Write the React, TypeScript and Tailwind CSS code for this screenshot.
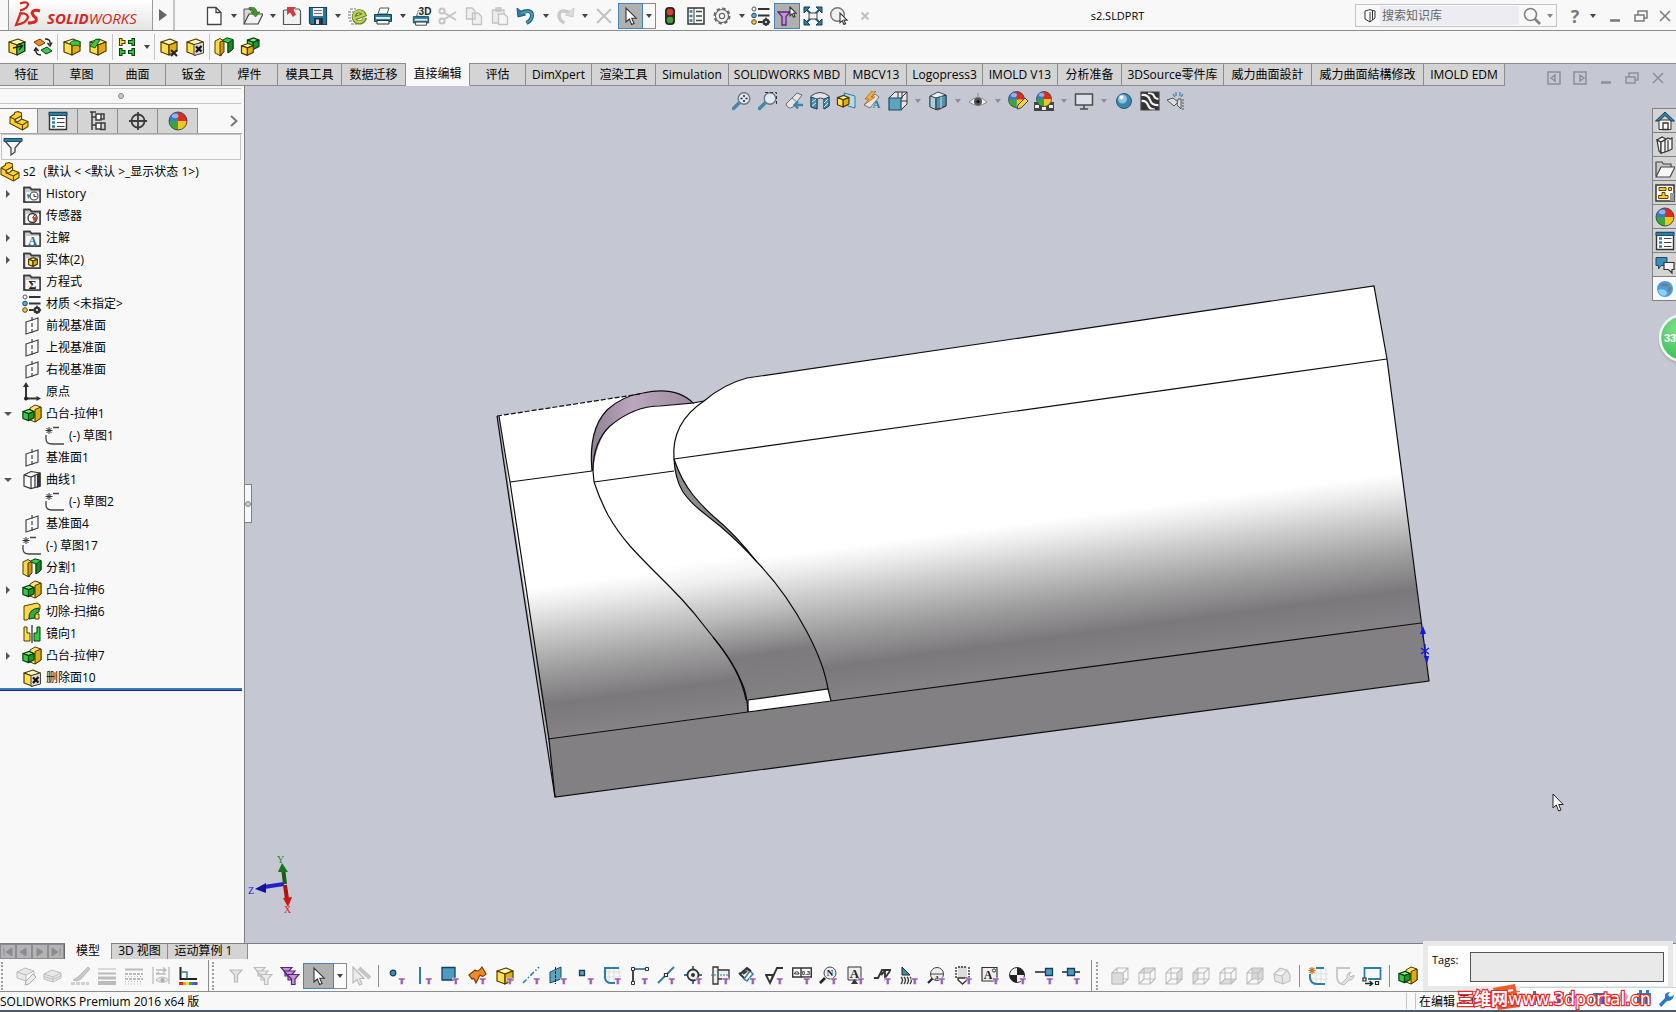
import React from "react";

/* ---------- shared icon parts ---------- */

function Cube({ x = 0, y = 0, s = 1, green = false }: { x?: number; y?: number; s?: number; green?: boolean }) {
  const c = green ? ["#8df08a", "#2fcf3f", "#149a26", "#0a3d10"] : ["#fff6b0", "#ffe04a", "#e2ab10", "#4f3b00"];
  return (
    <g transform={`translate(${x} ${y}) scale(${s})`} stroke={c[3]} strokeWidth={1.2 / s} strokeLinejoin="round">
      <path d="M2 5 11 2 18 5 10 8Z" fill={c[0]} />
      <path d="M2 5 10 8V18L2 15Z" fill={c[1]} />
      <path d="M10 8 18 5V14L10 18Z" fill={c[2]} />
    </g>
  );
}

function Ball({ cx = 10, cy = 10, r = 8 }: { cx?: number; cy?: number; r?: number }) {
  return (
    <g transform={`translate(${cx} ${cy}) scale(${r / 8})`}>
      <circle r="8" fill="#3a78d8" />
      <path d="M0 0V-8A8 8 0 0 1 8 0Z" fill="#dd2b20" />
      <path d="M0 0H8A8 8 0 0 1 0 8Z" fill="#f3c51f" />
      <path d="M0 0V8A8 8 0 0 1-8 0Z" fill="#35a838" />
      <ellipse cx="-2.5" cy="-4.5" rx="3" ry="2" fill="#fff" opacity=".45" />
      <circle r="8" fill="none" stroke="#444" strokeWidth=".8" />
    </g>
  );
}

const Folder = () => (
  <g stroke="#3c3c3c" strokeWidth="1.4" fill="#eee">
    <path d="M2 3.5H8L9.500 5.500H18V18H2Z" fill="#c9c9c9" />
    <path d="M4 8H18V18H4Z" fill="#f6f6f6" stroke="none" />
    <path d="M2 3.500H8L9.500 5.500H18V18H2Z" fill="none" />
  </g>
);

const Pointer = ({ x = 0, y = 0, s = 1 }: { x?: number; y?: number; s?: number }) => (
  <path transform={`translate(${x} ${y}) scale(${s})`} d="M0 0V14L3.300 11 5.600 16.500 8 15.400 5.700 10.200H10.200Z" fill="#fff" stroke="#333" strokeWidth={1.1 / s} />
);

const Wire = () => <path d="M2 7H13V18H2ZM7 2H18V13H7ZM2 7 7 2M13 7 18 2M13 18 18 13M2 18 7 13" fill="none" stroke="#bdbdbd" strokeWidth="1.1" />;

const Glyph = ({ x, y, size, fill, children }: { x: number; y: number; size: number; fill: string; children: string }) => (
  <text x={x} y={y} fontSize={size} fill={fill} fontWeight="700" fontFamily="Liberation Serif, serif" textAnchor="middle">
    {children}
  </text>
);

const Mini = ({ children, color = "none" }: { children: React.ReactNode; color?: string }) => (
  <g fill={color} stroke="#3c3c3c" strokeWidth="1.5">
    {children}
  </g>
);

const magnifier = (
  <>
    <path d="M7 12 1.500 17.500" stroke="#4a86aa" strokeWidth="3.500" strokeLinecap="round" />
    <circle cx="12" cy="7.500" r="5.800" fill="#dfe9f0" stroke="#6e7780" strokeWidth="1.400" />
  </>
);

const printer = (
  <>
    <path d="M5 8 7 2H16L14 8Z" fill="#fff" stroke="#555" />
    <path d="M1.500 8.500H18.500V15.500H1.500Z" fill="#2f7fa3" stroke="#1a3f55" />
    <path d="M3 12H17" stroke="#d6ecf6" strokeWidth="2" />
    <path d="M4 14.500H16V18H4Z" fill="#fff" stroke="#333" />
  </>
);

const bodies = (
  <>
    <path d="M8 4 13 1 19 3V14L13 18 8 16Z" fill="#ffe27a" stroke="#4f3b00" />
    <path d="M13 5.500 19 3V14L13 18Z" fill="#e2ab10" stroke="#4f3b00" />
    <Cube x={-0.500} y={4} s={0.700} green />
  </>
);

const split = (
  <>
    <path d="M1 4 6 1.500 9 3.500V15L7 19 1 16Z" fill="#ffd84a" stroke="#4f3b00" />
    <path d="M6 5 10 3.500V15L6 18.500Z" fill="#c99810" stroke="#4f3b00" />
    <path d="M8 3.500 13 .8 19 2.500V12L14 16V6Z" fill="#2fcf3f" stroke="#0a3d10" />
    <path d="M14 6 19 2.500V12L14 16Z" fill="#128b22" stroke="#0a3d10" />
  </>
);

const boxX = (
  <>
    <Cube />
    <path d="M9 7.500 18.500 5V16L9 18.500Z" fill="#d8d8d8" stroke="#444" />
    <path d="M11 9.500 16.500 14.500M16.500 9 11 15" stroke="#111" strokeWidth="2.200" />
  </>
);

const planeIcon = (
  <>
    <path d="M4 6 16 2V14L4 18Z" fill="none" stroke="#444" strokeWidth="1.200" />
    <path d="M10 1V19" stroke="#444" strokeWidth="1.200" strokeDasharray="4 2" />
  </>
);

const sketchIcon = (
  <>
    <path d="M1 9V13Q1 18 7 18H19M8 1.500H14" fill="none" stroke="#444" strokeWidth="1.300" />
    <path d="M4 1V8M.5 4.500H7.500M1.500 2 6.500 7M6.500 2 1.500 7" stroke="#333" />
  </>
);

const materialIcon = (
  <>
    <circle cx="3" cy="3" r="2" fill="#fff" stroke="#555" />
    <circle cx="3" cy="9.500" r="2.300" fill="#4fb3df" stroke="#245" />
    <circle cx="3" cy="16" r="2.300" fill="#ffc928" stroke="#543" />
    <path d="M7 3H18.500M7 9.500H18.500M7 16H11" stroke="#333" strokeWidth="1.800" />
    <circle cx="15" cy="16" r="2.400" fill="none" stroke="#333" strokeWidth="2.400" />
    <path d="M15 11.500V20M10.800 16H19.200" stroke="#333" strokeWidth="1.400" />
    <circle cx="15" cy="16" r="1.100" fill="#eee" />
  </>
);

const listIcon = (
  <>
    <path d="M1.500 1.500H18.500V18.500H1.500Z" fill="#fff" stroke="#333" strokeWidth="1.400" />
    <path d="M1 1.500H19V4.500H1Z" fill="#2f7fa3" stroke="#1d4c66" />
    <path d="M4 7.500H7M4 11.500H7M4 15.500H7" stroke="#2f7fa3" strokeWidth="2.400" />
    <path d="M9 7.500H16.500M9 11.500H16.500M9 15.500H16.500" stroke="#444" strokeWidth="1.200" />
  </>
);

const partIcon = (
  <g stroke="#5c4500" strokeWidth="1.100" strokeLinejoin="round">
    <path d="M1 6 5.500 3V1.500L9 .5 12.500 2V8L19 10.500V15.500L13.500 19 1 12.500Z" fill="#ffd02e" />
    <path d="M1 6 6 8.500 12.500 5M6 8.500V11L13.500 14 19 10.500M13.500 14V19" fill="none" />
    <path d="M6 8.500 12.500 5V8L8 11.500Z" fill="#fff0a0" />
  </g>
);

const funnel3 = (stroke: string, fill: string) => (
  <g fill={fill} stroke={stroke} strokeWidth="1.200">
    <path d="M1 1.500H12L8 6V10H5V6Z" />
    <path d="M4 5H15L11 9.500V14H8V9.500Z" />
    <path d="M7 8.500H19L15 13V18.500H11.500V13Z" />
  </g>
);

const originIcon = (
  <>
    <path d="M4 17V3M4 16.500H16" stroke="#333" strokeWidth="2" />
    <path d="M4 0 7 5H1ZM19 16.500 14.500 14V19Z" fill="#333" />
    <circle cx="4" cy="16.500" r="2" fill="#222" />
  </>
);

const chats = (
  <>
    <path d="M1 2.500H12V10.500H6L3.500 14V10.500H1Z" fill="#3c8db8" stroke="#1d4c66" />
    <path d="M9 7.500H19V14.500H17V18L13.500 14.500H9Z" fill="#f4f4f4" stroke="#333" strokeWidth="1.200" />
  </>
);

/* ---------- 20x20 icon set ---------- */

const icons: Record<string, React.ReactNode> = {
  newDoc: <path d="M3.500 1.500H12L17 6.500V18.500H3.500ZM12 1.500V6.500H17" fill="#fff" stroke="#444" strokeWidth="1.300" />,
  open: (
    <>
      <path d="M1 17V3H7L8 5H13V9" fill="#d8d8d8" stroke="#555" />
      <path d="M1 18 6 8H20L15 18Z" fill="#f2f2f2" stroke="#444" strokeWidth="1.200" />
      <path d="M6 1.500Q13 0 14 6H17L12.500 11 8 6H11Q10 3 6 3.500Z" fill="#3f9a28" stroke="#246015" strokeWidth=".6" />
    </>
  ),
  flag: (
    <>
      <path d="M2 4H8M13 3H17L18.500 5V18.500H1.500V4" fill="#f1f1f1" stroke="#555" strokeWidth="1.200" />
      <path d="M5 1H14L11.500 4 14 8.500 11 11 8 6.500 5 9Z" fill="#d13a3f" />
    </>
  ),
  save: (
    <>
      <path d="M1.500 1.500H18.500V18.500H3L1.500 17Z" fill="#2a7a9f" stroke="#173f55" strokeWidth="1.200" />
      <path d="M5 2H15V10H5Z" fill="#eee" />
      <path d="M6 4.500H14M6 7.500H14" stroke="#777" />
      <path d="M6 12H15V18.500H6Z" fill="#234" />
      <path d="M8 13.500H11V18H8Z" fill="#ddd" />
    </>
  ),
  publish: (
    <>
      <path d="M3 3H9M1 6H7M1 9H6M1 12H6M2 15H8M4 18H10" stroke="#777" strokeDasharray="3 1" />
      <path d="M17.500 12.500A5.500 5.500 0 1 1 17.500 9.500L8 11.500" transform="rotate(-8 12 10)" fill="none" stroke="#66801c" strokeWidth="4.200" />
      <path d="M17.200 12.500A5.500 5.500 0 1 1 17.400 9.500L8 11.500" transform="rotate(-8 12 10)" fill="none" stroke="#b9d45a" strokeWidth="2.200" />
    </>
  ),
  print: printer,
  print3d: (
    <>
      <g transform="translate(0 3) scale(.9)">{printer}</g>
      <text x="13" y="9" fontSize="10" fontWeight="700" fontFamily="Liberation Sans, sans-serif" textAnchor="middle" fill="#222" stroke="#f8f8f8" strokeWidth="2" paintOrder="stroke">3D</text>
    </>
  ),
  cut: (
    <g fill="none" stroke="#c4c4c4" strokeWidth="2">
      <circle cx="4" cy="5" r="2.600" />
      <circle cx="4" cy="15" r="2.600" />
      <path d="M6 6.500 18 14M6 13.500 18 6" />
    </g>
  ),
  copy: <path d="M2.500 2H8L11 5V13H2.500ZM8.500 7H14L17.500 10.500V18.500H8.500Z" fill="#f0f0f0" stroke="#c2c2c2" strokeWidth="1.300" />,
  paste: (
    <>
      <path d="M2.500 4H14V17H2.500ZM6 2H11V5H6Z" fill="#ececec" stroke="#c2c2c2" strokeWidth="1.300" />
      <path d="M8.500 8H14L17.500 11V18.500H8.500Z" fill="#f6f6f6" stroke="#c2c2c2" strokeWidth="1.300" />
    </>
  ),
  undo: (
    <>
      <path d="M4 7Q16 2 16 9.500 16 14 10.500 17" fill="none" stroke="#1d5876" strokeWidth="4" />
      <path d="M1 2 2 11 9.500 9Z" fill="#2f7fa3" stroke="#1d5876" />
      <path d="M5 7Q16 2.500 16 9.500 16 14 11 16.500" fill="none" stroke="#4a9cc0" strokeWidth="2" />
    </>
  ),
  redo: (
    <>
      <path d="M16 7Q4 2 4 9.500 4 14 9.500 17" fill="none" stroke="#cacaca" strokeWidth="3.500" />
      <path d="M19 2 18 11 10.500 9Z" fill="#dcdcdc" stroke="#cacaca" />
    </>
  ),
  delete: <path d="M3 3 17 17M17 3 3 17" stroke="#c2c2c2" strokeWidth="2" />,
  pointer: <Pointer x={5} y={2} />,
  traffic: (
    <>
      <rect x="5" y="1" width="10" height="18" rx="4" fill="#2c2c2c" />
      <circle cx="10" cy="6" r="3.200" fill="#e13a28" />
      <circle cx="10" cy="14" r="3.200" fill="#3fa32d" />
    </>
  ),
  props: (
    <>
      <path d="M2 2H18V18H2Z" fill="#fff" stroke="#333" strokeWidth="1.500" />
      <path d="M8 2V18" stroke="#333" />
      <path d="M3.500 5.500H6.500M3.500 10H6.500M3.500 14.500H6.500" stroke="#2f7fa3" strokeWidth="2.600" />
      <path d="M10 5.500H16M10 10H16M10 14.500H16" stroke="#444" strokeWidth="1.400" />
    </>
  ),
  gear: (
    <>
      <circle cx="10" cy="10" r="7.500" fill="none" stroke="#666" strokeWidth="2" strokeDasharray="3.400 2.490" />
      <circle cx="10" cy="10" r="6.500" fill="#f4f4f4" stroke="#666" strokeWidth="1.100" />
      <circle cx="10" cy="10" r="2.600" fill="#fff" stroke="#666" strokeWidth="1.200" />
    </>
  ),
  material: materialIcon,
  filterPointer: (
    <>
      <path d="M1 6H13L9 10.500V19H5V10.500Z" fill="#c890e0" stroke="#542a74" strokeWidth="1.300" />
      <Pointer x={13} y={1} s={0.620} />
    </>
  ),
  expand: (
    <>
      <path d="M3 3 17 17M17 3 3 17" stroke="#1d5876" strokeWidth="2" />
      <path d="M1 1H7L1 7ZM19 1H13L19 7ZM1 19H7L1 13ZM19 19H13L19 13Z" fill="#2f7fa3" stroke="#173f55" />
      <path d="M6 7H14V13H6Z" fill="#f4f4f4" stroke="#444" />
    </>
  ),
  lens: (
    <>
      <circle cx="8.500" cy="8.500" r="6.800" fill="#f0f0f0" stroke="#777" strokeWidth="1.400" />
      <Pointer x={11} y={7} s={0.700} />
    </>
  ),
  smallX: <path d="M6.500 6.500 13.500 13.500M13.500 6.500 6.500 13.500" stroke="#c0c0c0" strokeWidth="2" />,

  cubeMove: (
    <>
      <Cube />
      <path d="M10 8.500 17.500 5V14L10 18Z" fill="#38c046" stroke="#0a3d10" />
      <path d="M6 11 15 9M11.500 6.500 15.500 9 12 13" stroke="#222" strokeWidth="1.300" fill="none" />
    </>
  ),
  swap: (
    <>
      <path d="M1 5 7 2 12 6 6 9Z" fill="#f08a24" stroke="#6d3500" />
      <path d="M8 13 14 10 19 14 13 17Z" fill="#3bc94a" stroke="#0a3d10" />
      <path d="M12 2Q18 2 17 7M14.500 6 17 9 19 5.500M8 18Q2 18 3 12M1 14 3 11 5.500 14" fill="none" stroke="#222" strokeWidth="1.400" />
    </>
  ),
  fillet: (
    <>
      <Cube />
      <path d="M8 6Q11 2 18 4.500V10Q16 7 10 9Z" fill="#2fcf3f" stroke="#0a3d10" strokeWidth=".8" />
    </>
  ),
  chamfer: (
    <>
      <Cube />
      <path d="M2 9 8 2 12 3 7 11Z" fill="#2fcf3f" stroke="#0a3d10" strokeWidth=".8" />
    </>
  ),
  pattern: (
    <g strokeWidth="1.100">
      <path d="M2.500 1.500H5V3.500H8V6.500H5V8.500H2.500Z" fill="#ffe04a" stroke="#4f3b00" />
      <path d="M17.500 1.500H15V3.500H11.500V6.500H15V8.500H17.500ZM2.500 11.500H5V13.500H8V16.500H5V18.500H2.500ZM17.500 11.500H15V13.500H11.500V16.500H15V18.500H17.500Z" fill="#2fcf3f" stroke="#0a3d10" />
    </g>
  ),
  cubeX: (
    <>
      <Cube />
      <path d="M12 13 18 19M18 13 12 19" stroke="#222" strokeWidth="2" />
    </>
  ),
  boxX,
  split,
  combine: (
    <>
      <Cube x={6} y={-0.500} s={0.720} green />
      <Cube x={0} y={5} s={0.740} />
    </>
  ),

  part: partIcon,
  list: listIcon,
  config: (
    <Mini color="#fff">
      <path d="M4 1V19M4 6H8M4 14H8M2 1H8" />
      <path d="M8 3H13V9H8ZM8 12H13V18H8Z" />
      <path d="M13 3H16V8H12M13 12H17V18.500H12" fill="none" />
    </Mini>
  ),
  target: (
    <Mini>
      <circle cx="10" cy="10" r="6.500" strokeWidth="1.800" />
      <path d="M10 1V19M1 10H19" strokeWidth="1.800" />
    </Mini>
  ),
  ball: <Ball r={9} />,
  funnel: (
    <>
      <path d="M1.500 3.500 8 11V18L12 15V11L18.500 3.500Z" fill="#f4f4f4" stroke="#444" strokeWidth="1.300" />
      <path d="M1 1.500H19V4.500H1Z" fill="#2f7fa3" stroke="#1d4c66" />
    </>
  ),

  history: (
    <>
      <Folder />
      <circle cx="12" cy="12" r="4" fill="#fff" stroke="#444" strokeWidth="1.100" />
      <path d="M12 10V12.500H14.500" stroke="#333" fill="none" />
      <path d="M5 10 9 11 6 15Z" fill="#2f7fa3" />
    </>
  ),
  sensor: (
    <>
      <Folder />
      <circle cx="10.500" cy="12" r="4.500" fill="#fff" stroke="#333" strokeWidth="1.300" />
      <path d="M10.500 12 14.500 10V14.500L12 16Z" fill="#d84030" />
      <path d="M10.500 12 13 8.500" stroke="#222" />
    </>
  ),
  note: (
    <>
      <Folder />
      <Glyph x={10.500} y={17} size={12} fill="#1d6a94">A</Glyph>
    </>
  ),
  solid: (
    <>
      <Folder />
      <Cube x={5.500} y={6.500} s={0.550} />
    </>
  ),
  equation: (
    <>
      <Folder />
      <Glyph x={10.500} y={17} size={12} fill="#222">Σ</Glyph>
    </>
  ),
  plane: planeIcon,
  origin: originIcon,
  boss: bodies,
  sketch: sketchIcon,
  curve: (
    <g fill="#fff" stroke="#333" strokeWidth="1.200">
      <path d="M2 5 9 1.500 18 3V16L9 18.500 2 16Z" />
      <path d="M2 5 9 7 18 3M9 7V18.500M13 5.500V17.500" fill="none" />
      <path d="M15.500 5 18 3.500V16L15.500 17Z" fill="#333" />
    </g>
  ),
  sweep: (
    <>
      <path d="M2 4 15 1 18 3V7L5 18H2Z" fill="#ffd84a" stroke="#4f3b00" />
      <path d="M7 17Q6 7 17 6V10Q12 11 13 16Z" fill="#2fae3a" stroke="#0a3d10" />
      <path d="M13 12H17V17H13Z" fill="#ffd84a" stroke="#4f3b00" />
    </>
  ),
  mirror: (
    <>
      <path d="M2 3H5V9H8V17H2Z" fill="#ffe04a" stroke="#4f3b00" />
      <path d="M18 3H15V9H12V17H18Z" fill="#2fcf3f" stroke="#0a3d10" />
      <path d="M10 1V19" stroke="#222" strokeWidth="1.200" />
    </>
  ),

  zoomFit: (
    <>
      {magnifier}
      <path d="M12 4V6M12 9V11M8.500 7.500H10.500M13.500 7.500H15.500" stroke="#222" strokeWidth="1.500" />
    </>
  ),
  zoomArea: (
    <>
      {magnifier}
      <path d="M7 1.500H18.500V14" fill="none" stroke="#333" strokeDasharray="3 2" />
    </>
  ),
  prevView: (
    <>
      <path d="M2 13 13 2 18 4 9 16Q4 19 2 13Z" fill="#e6e6e6" stroke="#6b6b6b" />
      <path d="M8 7 13 11" stroke="#777" />
      <path d="M19 14H12M14 10.500 10.500 14 14 17.500" fill="none" stroke="#3c86ac" strokeWidth="2.400" />
    </>
  ),
  section: (
    <>
      <path d="M1 5Q10-2 19 5V15L14 18V8Q10 6 7 8V18L1 16Z" fill="#e4e4e4" stroke="#444" />
      <path d="M1 6 7 8V18L1 16ZM19 6 14 8V18L19 15Z" fill="#4a8fb0" stroke="#1d4c66" />
      <path d="M2 11 6 8M2 15 6 12M14 12 18 8M14 16 18 12" stroke="#d8ecf5" />
    </>
  ),
  viewCubeYellow: (
    <>
      <path d="M8 2 19 5V17L12 15Z" fill="#b9dbe8" stroke="#2f7fa3" />
      <Cube x={0} y={3} s={0.720} />
    </>
  ),
  viewA: (
    <>
      <path d="M2 14 13 3 17 6 8 17Z" fill="#e4e4e4" stroke="#777" />
      <path d="M10 0 3 8H7L2 14 13 6H9L14 0Z" fill="#f2b13c" stroke="#a05d10" strokeWidth=".7" />
      <Glyph x={14.500} y={17} size={11} fill="#3379a0">A</Glyph>
    </>
  ),
  orient: (
    <>
      <path d="M1 7 7 1H19V13L13 19" fill="#e7e7e7" stroke="#333" />
      <path d="M1 7H13V19H1Z" fill="#5ea4c2" stroke="#1d4c66" strokeWidth="1.200" />
      <path d="M13 7 19 1M10 1V7M14 1V8M13 10H19" stroke="#333" fill="none" />
    </>
  ),
  displayStyle: (
    <>
      <path d="M2 5 10 1 18 4V15L10 19 2 16Z" fill="#e8f1f5" stroke="#444" />
      <path d="M2 5 8 7V18.500L2 16Z" fill="#a8d0e0" stroke="#444" />
      <path d="M8 7 18 4V15L8 18.500Z" fill="#4d93b2" stroke="#333" />
      <path d="M13 5.500V17" stroke="#ddd" />
    </>
  ),
  eye: (
    <>
      <path d="M1 11Q10 2 19 11 10 18 1 11Z" fill="#eee" stroke="#888" />
      <circle cx="10" cy="10.500" r="4" fill="#555" />
      <circle cx="10" cy="10.500" r="1.600" fill="#111" />
      <path d="M10 2V6" stroke="#888" />
    </>
  ),
  ballPencil: (
    <>
      <Ball cx={8.500} cy={8.500} r={8} />
      <path d="M9 18 10 14 17 7 20 10 13 17Z" fill="#f3cf52" stroke="#444" />
    </>
  ),
  ballScene: (
    <>
      <path d="M0 11H20V20H0Z" fill="#444" />
      <path d="M1 14H5V17H1ZM8 16H12V19H8ZM15 14H19V17H15Z" fill="#eee" />
      <Ball cy={8} r={7.500} />
    </>
  ),
  monitor: <path d="M1.500 3H18.500V14H1.500ZM10 14V18M6 18H14" fill="#dcdfe5" stroke="#4c4c4c" strokeWidth="1.500" />,
  sphere: (
    <>
      <circle cx="10" cy="10" r="7.500" fill="#3c86ac" stroke="#245a76" />
      <circle cx="8.500" cy="8" r="4.500" fill="#8fc6dd" />
      <circle cx="7.500" cy="6.500" r="2" fill="#fff" />
    </>
  ),
  zebra: (
    <>
      <path d="M1 1H19V19H1Z" fill="#333" />
      <path d="M1 4Q8 3 10 9T19 14M1 10Q6 9 8 14T15 18.500M8 2Q13 2 14 5T19 8" fill="none" stroke="#f2f2f2" strokeWidth="2.200" />
      <path d="M1 1H19V19H1Z" fill="none" stroke="#444" strokeWidth="1.200" />
    </>
  ),
  instant: (
    <>
      <path d="M1 9 7 7 12 11 8 15Z" fill="#ddd" stroke="#555" />
      <path d="M12 8H15V18L11 14Z" fill="#ddd" stroke="#555" />
      <path d="M10 1V5M14 1V5M17 3 15 6M7 3 9 6" stroke="#3c86ac" strokeWidth="1.300" />
      <path d="M16 9H18M16 12H18M16 15H18M16 18H18" stroke="#555" />
    </>
  ),

  home: (
    <>
      <path d="M4 9H16V18.500H4Z" fill="#f6f6f6" stroke="#333" />
      <path d="M10 1 0.500 10H4L10 4.500 16 10H19.500Z" fill="#2f7fa3" stroke="#173f55" />
      <path d="M8 12H13V18.500H8Z" fill="#fff" stroke="#333" strokeWidth="1.300" />
    </>
  ),
  books: (
    <g fill="#f4f4f4" stroke="#333" strokeWidth="1.200">
      <path d="M2 5 6 7V18L4 16Z" />
      <path d="M2 5 7 2 11 4 6 7ZM6 7 10 5V17L6 18ZM10 5 13 3 15 4 17 3V14L13 16 10 17ZM13 5V16" />
    </g>
  ),
  folder: (
    <>
      <path d="M1 17V3H7L8.500 5H16V8" fill="#c9c9c9" stroke="#444" strokeWidth="1.200" />
      <path d="M1 18 6 8H20L15 18Z" fill="#f6f6f6" stroke="#444" strokeWidth="1.200" />
    </>
  ),
  palette: (
    <>
      <path d="M1 2H19V18H1Z" fill="#fff" stroke="#333" strokeWidth="1.500" />
      <path d="M4 4.500H11V7.500H4ZM13.500 4.500H16.500V7.500H13.500ZM7 9.500H10V12.500H13V15.500H3.500V12.500H7Z" fill="#ffc928" stroke="#5c4500" />
      <path d="M15 10H19V18H15Z" fill="#999" />
    </>
  ),
  chats,
  globe: (
    <>
      <circle cx="10" cy="10" r="8" fill="#4a9fdc" />
      <path d="M4 7 8 4 14 5 12 8 8 7ZM13 8 17 8 15 14 13 12Z" fill="#6d7f8c" />
      <path d="M3 11Q8 9 11 12T9 17Q4 16 3 11Z" fill="#8fd0f4" />
    </>
  ),

  layersPen: (
    <>
      <path d="M1 6 9 2 18 5 10 9ZM1 6V12L10 15V9M18 5V10" fill="#e8e8e8" stroke="#bcbcbc" />
      <path d="M9 19 10 15 17 8 20 11 13 18Z" fill="#eee" stroke="#aaa" />
    </>
  ),
  layers: <path d="M1 8 9 4 18 7 10 11ZM1 8V13L10 16V11M18 7V12L10 16M1 10.500 10 13.500 18 9.500" fill="#e8e8e8" stroke="#bcbcbc" />,
  brush: (
    <>
      <path d="M18 1 20 3 11 13 7 15 3 14 8 11Z" fill="#c9c9c9" stroke="#bbb" />
      <path d="M1 17.500H19" stroke="#d0d0d0" strokeWidth="3" strokeDasharray="4 1" />
    </>
  ),
  lines: (
    <>
      <path d="M1 3H19" stroke="#bbb" />
      <path d="M1 7.500H19" stroke="#bbb" strokeWidth="2" />
      <path d="M1 12H19" stroke="#bbb" strokeWidth="3" />
      <path d="M1 17H19" stroke="#bbb" strokeWidth="4" />
    </>
  ),
  dashes: (
    <>
      <path d="M1 3.500H19" stroke="#bbb" strokeWidth="2" />
      <path d="M1 8H19M1 13H19" stroke="#bbb" strokeWidth="2" strokeDasharray="3 1" />
      <path d="M1 10.500H19M1 15.500H19M1 18H19" stroke="#bbb" strokeDasharray="1 2" />
    </>
  ),
  edgeView: (
    <>
      <path d="M2 1V18M18 1V18" stroke="#c4c4c4" strokeWidth="1.500" />
      <path d="M5 4H15M12 1.500 15 4 12 6.500M15 8H5M8 6 5 8" fill="none" stroke="#bbb" strokeWidth="1.500" />
      <path d="M5 14Q11 8 18 14 11 19 5 14Z" fill="#e6e6e6" stroke="#bbb" />
      <circle cx="11.500" cy="14" r="2" fill="#aaa" />
    </>
  ),
  colorLine: (
    <>
      <path d="M2.500 1V13H19" fill="none" stroke="#222" strokeWidth="2" />
      <path d="M3 6H9V12.500" fill="none" stroke="#2f7fa3" strokeWidth="1.500" />
      <path d="M1 17.500H5" stroke="#e8261c" strokeWidth="3" />
      <path d="M5 17.500H8" stroke="#f5a21c" strokeWidth="3" />
      <path d="M8 17.500H11" stroke="#e9e22c" strokeWidth="3" />
      <path d="M11 17.500H14" stroke="#3da435" strokeWidth="3" />
      <path d="M14 17.500H17" stroke="#2c6fd0" strokeWidth="3" />
      <path d="M17 17.500H19.500" stroke="#7c2fc0" strokeWidth="3" />
    </>
  ),
  funnelGrey: <path d="M4 4H16L11.500 9V16H8.500V9Z" fill="#e4e4e4" stroke="#bbb" strokeWidth="1.200" />,
  funnelsGrey: funnel3("#bdbdbd", "#ececec"),
  funnelsPurple: funnel3("#542a74", "#c890e0"),
  pointerGrey: (
    <>
      <path d="M8 2 19 12" stroke="#c4c4c4" strokeWidth="4" />
      <path d="M2 1V17L6 13.500 8.500 19 11 18 8.500 12.500H13Z" fill="#ececec" stroke="#bbb" strokeWidth="1.200" />
    </>
  ),

  fDot: <circle cx="6" cy="7" r="2.800" fill="#3c8db8" stroke="#173f55" strokeWidth="1.200" />,
  fLine: <path d="M6 1V18" stroke="#2f7fa3" strokeWidth="2" />,
  fFace: <path d="M1 1.500H14V14H1Z" fill="#4c9cc4" stroke="#173f55" strokeWidth="1.300" />,
  fSurf: <path d="M1 9 7 4Q10 7 14 1L18 8Q15 12 12 9L8 17Q6 11 4 13Z" fill="#ee8a28" stroke="#7a3d00" strokeWidth="1.200" />,
  fCube: <Cube />,
  fAxis: <path d="M1 17 17 1" stroke="#2f7fa3" strokeWidth="1.600" strokeDasharray="5 2 1.500 2" />,
  fPlane: (
    <>
      <path d="M1 6 12 1V13L1 17Z" fill="#5ea4c2" stroke="#1d4c66" />
      <path d="M6.500 1V18" stroke="#222" strokeDasharray="3 1" />
    </>
  ),
  fPoint: <path d="M3.500 4.500H8.500V9.500H3.500Z" fill="#5ea4c2" stroke="#173f55" strokeWidth="1.300" />,
  fSketch: (
    <>
      <path d="M0 6H18M0 11H18M6 0V18M11 0V18M16 0V18" stroke="#ddd" />
      <path d="M16 2H2V12Q3 17 8 17H12" fill="none" stroke="#2f7fa3" strokeWidth="2" />
    </>
  ),
  fSegs: (
    <>
      <path d="M3 3V17" stroke="#333" strokeWidth="1.800" />
      <path d="M3 3H17" stroke="#2f7fa3" strokeWidth="1.800" />
      <path d="M1.500 1.500H4.500V4.500H1.500ZM15.500 1.500H18.500V4.500H15.500ZM1.500 15.500H4.500V18.500H1.500Z" fill="#fff" stroke="#333" />
    </>
  ),
  fMid: (
    <>
      <path d="M1 17 17 1" stroke="#2f7fa3" strokeWidth="2" />
      <path d="M7.500 7.500H10.500V10.500H7.500Z" fill="#fff" stroke="#333" strokeWidth="1.200" />
    </>
  ),
  fCenter: (
    <>
      <path d="M9 0V18M0 9H18" stroke="#2f7fa3" strokeWidth="2" />
      <circle cx="9" cy="9" r="5.500" fill="#f2f2f2" stroke="#333" strokeWidth="1.800" />
      <circle cx="9" cy="9" r="2" fill="#333" />
    </>
  ),
  fClamp: (
    <>
      <path d="M2 1H7V18H2ZM7 4H18V13H7" fill="#eee" stroke="#333" strokeWidth="1.300" />
      <path d="M0 9H19" stroke="#2f7fa3" strokeDasharray="2 1" />
    </>
  ),
  fDim: (
    <>
      <path d="M6 13 12 5 15 8 9 15Z" fill="#fff" stroke="#2f7fa3" strokeWidth="1.500" />
      <path d="M2 8 9 2 13 5M2 8 6 12M4 10 1 7M9 2 11 5M5 8 9 5" fill="none" stroke="#333" strokeWidth="2" />
    </>
  ),
  fFinish: <path d="M1 9H8L5 17ZM5 17 12 2H18" fill="none" stroke="#333" strokeWidth="1.800" />,
  fGtol: (
    <>
      <path d="M0.700 2H19.300V11H0.700ZM9 2V11" fill="#fff" stroke="#333" strokeWidth="1.400" />
      <path d="M2.500 8A2.200 2.200 0 0 1 7 8Z" fill="none" stroke="#333" />
      <text x="14" y="9" fontSize="6" fontWeight="700" textAnchor="middle" fontFamily="Liberation Sans, sans-serif" fill="#222">0.3</text>
    </>
  ),
  fNote: (
    <>
      <path d="M6 12 1 17" stroke="#222" strokeWidth="2.600" />
      <circle cx="11" cy="7" r="6" fill="#eee" stroke="#444" />
      <Glyph x={11} y={10} size={9} fill="#222">N</Glyph>
    </>
  ),
  fDatum: (
    <>
      <path d="M2 1H15V14H2Z" fill="#eee" stroke="#333" />
      <path d="M8.500 13 12 18H5Z" fill="#333" />
      <Glyph x={8.500} y={12} size={13} fill="#222">A</Glyph>
    </>
  ),
  fWeld: <path d="M1 12H5L9 4H18M8 9 12 5V12L17 5" fill="none" stroke="#333" strokeWidth="1.800" />,
  fHatch: (
    <>
      <path d="M2 1V9H10Z" fill="#3c8db8" stroke="#222" />
      <path d="M1 11Q4 14 1 18M4 11Q7 14 4 18M7 11Q10 14 7 18M10 11Q13 14 10 18" fill="none" stroke="#333" strokeWidth="1.300" />
    </>
  ),
  fDatumT: (
    <>
      <path d="M6 12 1 17" stroke="#222" strokeWidth="2.200" />
      <circle cx="10" cy="8" r="6.500" fill="#eee" stroke="#444" />
      <path d="M3.500 8H16.500" stroke="#444" />
      <Glyph x={10} y={13.500} size={7} fill="#222">A</Glyph>
    </>
  ),
  fCosmetic: (
    <>
      <path d="M4 1H13V12L8.500 17 4 12Z" fill="#ddd" />
      <path d="M2 1V12M15 1V12M4 1H13" fill="none" stroke="#333" strokeWidth="1.400" strokeDasharray="2 1" />
      <path d="M4 12H13V14L8.500 18 4 14Z" fill="#fff" stroke="#333" strokeWidth="1.400" />
    </>
  ),
  fDeg: (
    <>
      <path d="M1 1.500H16V15H1Z" fill="#eee" stroke="#333" strokeWidth="1.200" />
      <Glyph x={7} y={13} size={12} fill="#222">A</Glyph>
      <circle cx="13" cy="4.500" r="1.600" fill="#fff" stroke="#333" />
    </>
  ),
  fMass: (
    <>
      <circle cx="9" cy="9" r="7.500" fill="#eee" stroke="#333" />
      <path d="M9 9V1.500A7.500 7.500 0 0 1 16.500 9ZM9 9V16.500A7.500 7.500 0 0 1 1.500 9Z" fill="#222" />
    </>
  ),
  fConnA: (
    <>
      <path d="M0 6H11" stroke="#222" strokeWidth="1.500" />
      <path d="M10.500 2.500H17.500V9.500H10.500Z" fill="#4c9cc4" stroke="#173f55" strokeWidth="1.300" />
    </>
  ),
  fConnB: (
    <>
      <path d="M0 6H18" stroke="#222" strokeWidth="1.500" />
      <path d="M5.500 2.500H12.500V9.500H5.500Z" fill="#4c9cc4" stroke="#173f55" strokeWidth="1.300" />
    </>
  ),

  w1: (<><Wire /><path d="M2 7H13V18H2Z" fill="#dcdcdc" stroke="#bdbdbd" /></>),
  w2: (<><path d="M2 7 7 2H18L13 7Z" fill="#dcdcdc" /><Wire /></>),
  w3: (<><path d="M13 7 18 2V13L13 18Z" fill="#dcdcdc" /><Wire /></>),
  w4: (<><path d="M2 7 7 2V13L2 18Z" fill="#dcdcdc" /><Wire /></>),
  w5: (<><path d="M2 18 7 13H18L13 18Z" fill="#dcdcdc" /><Wire /></>),
  w6: (<><path d="M7 2H18V13H7Z" fill="#d6d6d6" /><Wire /></>),
  w7: <path d="M2 8 8 2 15 4 18 9V15L11 18 3 15ZM2 8 10 10 15 4M10 10 11 18" fill="#e6e6e6" stroke="#bdbdbd" strokeWidth="1.100" />,
  newSketch: (
    <>
      <path d="M2 8H20M2 13H20M8 2V19M13 2V19M18 2V19" stroke="#ddd" />
      <path d="M8 2H16M2 8V12Q3 18 9 18H17" fill="none" stroke="#2f7fa3" strokeWidth="2" />
      <path d="M4 1V8M.5 4.500H7.500M1.500 2 6.500 7M6.500 2 1.500 7" stroke="#c8781c" strokeWidth="1.200" />
    </>
  ),
  repair: (
    <>
      <path d="M15 2H2V12Q3 18 8 18" fill="none" stroke="#c6c6c6" strokeWidth="1.800" />
      <path d="M6 18 12 12Q11 7 16 6L14 9 16 11 19 9Q19 14 14 14L9 19Z" fill="#e0e0e0" stroke="#bbb" />
    </>
  ),
  rectArrow: (
    <>
      <path d="M2.500 13V2H18.500V13H6" fill="none" stroke="#2f7fa3" strokeWidth="1.800" />
      <path d="M1 12H4V15H1ZM13.500 15.500H16.500V18.500H13.500Z" fill="#fff" stroke="#222" strokeWidth="1.200" />
      <path d="M3 17.500H10M7.500 15 10.500 17.500 7.500 20" fill="none" stroke="#222" strokeWidth="1.500" />
    </>
  ),
};

function Icon({ n }: { n: string }) {
  return (
    <svg viewBox="0 0 20 20" className="h-5 w-5 shrink-0" aria-hidden="true">
      {icons[n]}
      {n[0] === "f" && n[1] === n[1].toUpperCase() ? <path d="M11.500 12H18V14H16.200V18.500H13.300V14H11.500Z" fill="#9c5cb8" stroke="#f8f8f8" strokeWidth=".5" /> : null}
    </svg>
  );
}

const Caret = ({ tone = "text-[#444]" }: { tone?: string }) => (
  <svg viewBox="0 0 6 4" className={`h-1 w-1.5 ${tone}`} aria-hidden="true">
    <path d="M0 0H6L3 4Z" fill="currentColor" />
  </svg>
);

/* ---------- toolbar building blocks ---------- */

function Tools({ names, width = "w-[26px]", caret = "w-[13px]", tone }: { names: string[]; width?: string; caret?: string; tone?: string }) {
  return (
    <>
      {names.map((n, i) =>
        n === "v" ? (
          <button key={i} aria-label="更多" className={`flex h-6 items-center justify-center ${caret}`}>
            <Caret tone={tone} />
          </button>
        ) : n === "|" ? (
          <span key={i} className="mx-px h-[26px] w-px shrink-0 bg-[#c4c4c4]" />
        ) : (
          <button key={i} aria-label={n} className={`flex h-6 shrink-0 items-center justify-center ${width}`}>
            <Icon n={n} />
          </button>
        ),
      )}
    </>
  );
}

const SelectTool = ({ main }: { main: string }) => (
  <span className="flex h-[26px] shrink-0">
    <button aria-label="选择" className={`flex items-center justify-center border border-[#3f87b8] bg-[#b0b0b0] ${main}`}>
      <Icon n="pointer" />
    </button>
    <button aria-label="选择选项" className="flex w-[13px] items-center justify-center border border-l-0 border-[#8a8a8a] bg-[#fbfbfb]">
      <Caret />
    </button>
  </span>
);

const WindowGlyph = ({ d }: { d: string }) => (
  <svg viewBox="0 0 14 14" className="h-3.5 w-3.5" fill="none" stroke="currentColor" strokeWidth="1.500" aria-hidden="true">
    <path d={d} />
  </svg>
);

const MIN = "M2 12H12M2 11H12";
const RESTORE = "M1 6H10V12H1ZM4 6V2H13V9H10";
const CLOSE = "M2 2 12 12M12 2 2 12";

/* ---------- header ---------- */

function TitleBar() {
  return (
    <header className="flex h-[31px] shrink-0 items-center border-b border-[#8c8c8c]">
      <div className="ml-2 flex h-full w-[145px] items-center border-x border-[#9a9a9a] bg-linear-to-b from-white to-[#e4e4e4] pl-1">
        <svg viewBox="0 0 30 28" className="h-7 w-[30px] shrink-0" fill="none" stroke="#d8261c" strokeWidth="2.200" aria-hidden="true">
          <path d="M7 2.500Q15 0 15 3.500 14 8 7 9.500M8 11 3 24Q14 22 15 16 14 11 6 13" />
          <path d="M27 10Q20 8 19 12 20 15 23 17 25 22 15 22" strokeWidth="3" />
        </svg>
        <span className="ml-1 pt-1.5 text-[15px] italic leading-6 text-[#d8261c]">
          <b className="font-bold">SOLID</b>WORKS
        </span>
      </div>
      <button aria-label="菜单" className="flex h-full w-[22px] items-center justify-center border-r-2 border-[#c4c4c4]">
        <svg viewBox="0 0 8 12" className="h-3 w-2" aria-hidden="true"><path d="M0 0 8 6 0 12Z" fill="#666" /></svg>
      </button>
      <div className="ml-[26px] flex shrink-0 items-center pt-0.5">
        <Tools names={["newDoc", "v", "open", "v", "flag", "save", "v", "publish", "print", "v", "print3d", "cut", "copy", "paste", "undo", "v", "redo", "v", "delete"]} />
        <span className="mx-px flex"><SelectTool main="w-[25px]" /></span>
        <Tools names={["traffic", "props", "gear", "v", "material"]} />
        <button aria-label="选择过滤器" className="flex h-[26px] w-[26px] items-center justify-center border border-[#3f87b8] bg-[#b0b0b0]">
          <Icon n="filterPointer" />
        </button>
        <Tools names={["expand", "lens", "smallX"]} />
      </div>
      <h1 className="min-w-0 flex-1 pl-0.5 pt-0.5 text-center text-[11px] font-normal">s2.SLDPRT</h1>
      <div className="mt-px flex h-[23px] w-[202px] shrink-0 items-center border border-[#c4c4c4] bg-[#f8f8f8]">
        <svg viewBox="0 0 12 14" className="ml-2 h-3.5 w-3 shrink-0" fill="#fff" stroke="#333" aria-hidden="true">
          <path d="M1 2 6 .7 11 2V9L6 13 1 10ZM6 3V13M8.500 2V11" />
        </svg>
        <input aria-label="搜索知识库" placeholder="搜索知识库" className="ml-1 h-[19px] w-[139px] bg-[#ebedf2] px-0.5 text-[12px] outline-none placeholder:text-[#666]" />
        <button aria-label="搜索" className="ml-1 flex items-center gap-1.5">
          <svg viewBox="0 0 18 18" className="h-[18px] w-[18px]" fill="none" stroke="#808080" aria-hidden="true">
            <circle cx="7.500" cy="7.500" r="6" strokeWidth="1.600" />
            <path d="M12 12 17 17" strokeWidth="2.600" />
          </svg>
          <Caret tone="text-[#888]" />
        </button>
      </div>
      <div className="mt-0.5 flex shrink-0 items-center text-[#7a7a7a]">
        <button aria-label="帮助" className="ml-2.5 w-4 text-[18px] font-bold leading-6">?</button>
        <button aria-label="帮助选项" className="flex w-5 justify-center"><Caret /></button>
        <button aria-label="最小化" className="flex w-6 justify-center"><WindowGlyph d={MIN} /></button>
        <button aria-label="还原" className="flex w-7 justify-center"><WindowGlyph d={RESTORE} /></button>
        <button aria-label="关闭" className="mr-px flex w-5 justify-center"><WindowGlyph d={CLOSE} /></button>
      </div>
    </header>
  );
}

const commandTabs: [string, string][] = [
  ["特征", "w-[54px]"],
  ["草图", "w-14"],
  ["曲面", "w-14"],
  ["钣金", "w-14"],
  ["焊件", "w-14"],
  ["模具工具", "w-16"],
  ["数据迁移", "w-16"],
  ["直接编辑", "w-16"],
  ["评估", "w-14"],
  ["DimXpert", "w-[66px]"],
  ["渲染工具", "w-16"],
  ["Simulation", "w-[73px]"],
  ["SOLIDWORKS MBD", "w-[117px]"],
  ["MBCV13", "w-[61px]"],
  ["Logopress3", "w-[76px]"],
  ["IMOLD V13", "w-[75px]"],
  ["分析准备", "w-16"],
  ["3DSource零件库", "w-[102px]"],
  ["威力曲面設計", "w-[88px]"],
  ["威力曲面結構修改", "w-28"],
  ["IMOLD EDM", "w-[81px]"],
];

function CommandTabs() {
  return (
    <nav className="flex h-[23px] shrink-0 items-stretch border-t border-[#8c8c8c] bg-[#c5c8d3]">
      {commandTabs.map(([label, width]) => (
        <button
          key={label}
          className={`shrink-0 whitespace-nowrap border-b border-r border-[#8c8c8c] text-center text-[12px] leading-5 ${width} ${label === "直接编辑" ? "-mt-px border-b-[#f8f8f8] bg-[#f8f8f8]" : "bg-[#d4d4d4]"}`}
        >
          {label}
        </button>
      ))}
    </nav>
  );
}

/* ---------- feature tree ---------- */

type Row = { icon: string; text: string; open?: boolean; nested?: boolean };

const rows: Row[] = [
  { icon: "history", text: "History", open: false },
  { icon: "sensor", text: "传感器" },
  { icon: "note", text: "注解", open: false },
  { icon: "solid", text: "实体(2)", open: false },
  { icon: "equation", text: "方程式" },
  { icon: "material", text: "材质 <未指定>" },
  { icon: "plane", text: "前视基准面" },
  { icon: "plane", text: "上视基准面" },
  { icon: "plane", text: "右视基准面" },
  { icon: "origin", text: "原点" },
  { icon: "boss", text: "凸台-拉伸1", open: true },
  { icon: "sketch", text: "(-) 草图1", nested: true },
  { icon: "plane", text: "基准面1" },
  { icon: "curve", text: "曲线1", open: true },
  { icon: "sketch", text: "(-) 草图2", nested: true },
  { icon: "plane", text: "基准面4" },
  { icon: "sketch", text: "(-) 草图17" },
  { icon: "split", text: "分割1" },
  { icon: "boss", text: "凸台-拉伸6", open: false },
  { icon: "sweep", text: "切除-扫描6" },
  { icon: "mirror", text: "镜向1" },
  { icon: "boss", text: "凸台-拉伸7", open: false },
  { icon: "boxX", text: "删除面10" },
];

function TreeRow({ row }: { row: Row }) {
  return (
    <li className={`flex h-[22px] items-center pt-0.5 ${row.nested ? "pl-[23px]" : ""}`}>
      <span className="flex w-[22px] shrink-0 pl-1">
        {row.open !== undefined && (
          <button aria-label={row.open ? "折叠" : "展开"}>
            <svg viewBox="0 0 8 8" className="h-2 w-2" aria-hidden="true">
              <path d={row.open ? "M0 2H8L4 6Z" : "M2 0 6 4 2 8Z"} fill="#555" />
            </svg>
          </button>
        )}
      </span>
      <Icon n={row.icon} />
      <span className="ml-1 whitespace-nowrap text-[12px]">{row.text}</span>
    </li>
  );
}

function FeaturePanel() {
  return (
    <aside className="flex w-[245px] shrink-0 flex-col border-r border-[#808080] pt-0.5">
      <div className="mr-[3px] flex h-4 items-center justify-center border-y border-[#c4c4c4]">
        <span className="h-1.5 w-1.5 rounded-full border border-[#888] bg-[#ccc]" />
      </div>
      <div className="mr-0.5 mt-1 flex h-[26px] items-stretch border-b border-[#a8a8a8]">
        {["part", "list", "config", "target", "ball"].map((n, i) => (
          <button
            key={n}
            aria-label={n}
            className={`flex items-center justify-center border-r border-t border-[#8c8c8c] ${i === 0 ? "w-[38px] bg-[#f8f8f8]" : "w-10 bg-[#d4d4d4]"}`}
          >
            <Icon n={n} />
          </button>
        ))}
        <button aria-label="更多选项卡" className="ml-auto mr-1 flex items-center">
          <svg viewBox="0 0 8 12" className="h-3 w-2" fill="none" stroke="#777" strokeWidth="2" aria-hidden="true"><path d="M1 1 6.500 6 1 11" /></svg>
        </button>
      </div>
      <label className="ml-px mr-[3px] flex h-[26px] items-center border border-[#c4c4c4] pl-px">
        <Icon n="funnel" />
        <input aria-label="过滤器" className="h-full min-w-0 flex-1 bg-transparent px-1 text-[12px] outline-none" />
      </label>
      <div className="flex h-[22px] items-center pt-0.5 text-[12px]">
        <Icon n="part" />
        <span className="ml-[3px] flex gap-2 whitespace-nowrap">
          <span>s2</span>
          <span>(默认 &lt; &lt;默认 &gt;_显示状态 1&gt;)</span>
        </span>
      </div>
      <ul>
        {rows.map((row) => (
          <TreeRow key={row.text} row={row} />
        ))}
      </ul>
      <div className="mr-0.5 h-[3px] border-b border-[#1c1c8c] bg-[#2f7fc0]" />
    </aside>
  );
}

/* ---------- graphics area ---------- */

function Model() {
  const leftGroove = "594,482 Q600,500 608,515 Q617,531 630,546 Q640,557 650,567 L670,587 Q682,599 693,612 L713,637 Q722,648 730,660 Q737,671 742,683 Q747,694 748,712";
  return (
    <svg viewBox="245 86 1431 857" preserveAspectRatio="xMinYMin meet" className="absolute inset-0 h-full w-full" role="img" aria-label="零件模型">
      <defs>
        <linearGradient id="shade" gradientUnits="userSpaceOnUse" x1="880" y1="542" x2="900" y2="692">
          <stop offset="0" stopColor="#fff" />
          <stop offset=".12" stopColor="#ececec" />
          <stop offset=".3" stopColor="#cacaca" />
          <stop offset=".55" stopColor="#9e9d9e" />
          <stop offset=".78" stopColor="#7b787b" />
          <stop offset="1" stopColor="#868386" />
        </linearGradient>
        <linearGradient id="groove" gradientUnits="userSpaceOnUse" x1="690" y1="562" x2="710" y2="702">
          <stop offset="0" stopColor="#fff" />
          <stop offset=".15" stopColor="#f0f0f0" />
          <stop offset=".42" stopColor="#bcbcbc" />
          <stop offset=".72" stopColor="#7d7a7d" />
          <stop offset="1" stopColor="#838083" />
        </linearGradient>
        <linearGradient id="lilac" x1="0" x2="1">
          <stop offset="0" stopColor="#8f8192" />
          <stop offset=".4" stopColor="#bba6bf" />
          <stop offset="1" stopColor="#9c8d9e" />
        </linearGradient>
        <radialGradient id="green" cx=".4" cy=".3" r=".8">
          <stop offset="0" stopColor="#7fe08c" />
          <stop offset="1" stopColor="#36b850" />
        </radialGradient>
      </defs>

      <path d="M497,416 L640,394 L662,391 L693,403 L704,401 Q724,384 747,378 L1374,286 L1387,359 L1421,623 L548,739 Z" fill="url(#shade)" />
      <path d={`M${leftGroove} L748,700 L828,689 Q823,665 807,632 Q795,611 773,580 L757,562 Q734,532 713,518 Q678,490 674,459 L640,440 Z`} fill="url(#groove)" />
      <path d="M548,739 1421,623 1429,681 555,797Z" fill="#838083" />
      <path d="M497,416 Q512,530 546,739 L548,739 Q525,600 499,416Z" fill="#b4b5b5" />
      <path d="M748,700 828,689 831,701 748,712Z" fill="#fff" />
      <path d="M592,471 Q588,430 607,410 Q622,396 643,393 Q676,386 693,403 L660,406 Q634,406 610,426 Q596,442 593,471Z" fill="url(#lilac)" />
      <path d="M674,459 Q681,480 693,495 Q702,506 713,516 Q735,534 757,562 Q740,543 720,526 L700,510 Q690,502 683,492 Q675,479 674,459Z" fill="#8c8c8c" />

      <g fill="none" stroke="#0c0c0c" strokeWidth="1.200">
        <path d="M497,416 L640,394" strokeDasharray="5 2" />
        <path d="M693,403 L704,401 Q724,384 747,378 L1374,286 L1387,359 L1429,681 L555,797 L546,739 Q518,560 497,416" />
        <path d="M499,416 Q506,460 510,482 Q526,590 549,739 L555,797" />
        <path d="M548,739 748,712 831,701 1421,623M748,700 828,689 831,701M748,700V712" />
        <path d="M510,482 592,471M594,482 674,471M674,459 1387,359" />
        <path d="M704,401 Q671,423 674,459" />
        <path d="M592,471 Q588,430 607,410 Q622,396 643,393 Q676,386 693,403 L660,406 Q634,406 610,426 Q593,442 593,471 L594,482" />
        <path d={`M${leftGroove}`} />
        <path d="M674,459 Q681,480 693,495 Q702,506 713,516 Q735,534 757,562 Q786,592 807,632 Q824,664 828,689" />
        <path d="M674,459 Q675,479 683,492 Q690,502 700,510 L720,526 Q740,543 757,562" />
        <path d="M713,637 Q741,671 746,700" />
      </g>

      <g stroke="#1414e8" strokeWidth="1.300" fill="#1414e8">
        <path d="M1423,630V638M1425,644V658M1421,648 1429,654M1429,648 1421,654" />
        <path d="M1423,626 1426,634H1420ZM1427,664 1424,656H1429Z" stroke="none" />
      </g>

      <g strokeWidth="4">
        <path d="M284,884 264,887" stroke="#2222c8" />
        <path d="M255,889 266,883V893Z" fill="#1212a0" />
        <path d="M285,884 283,868" stroke="#1a5a1a" />
        <path d="M282,863 288,872 278,872Z" fill="#14781a" />
        <path d="M285,885 287,899" stroke="#a81414" />
        <path d="M288,907 283,898 292,897Z" fill="#d41414" />
      </g>
      <g fontSize="10" fontFamily="Liberation Serif, serif">
        <text x="277" y="863" fill="#128a12">Y</text>
        <text x="248" y="894" fill="#1414e8">Z</text>
        <text x="284" y="913" fill="#e81414">X</text>
      </g>

      <circle cx="1683" cy="340" r="25" fill="#999" opacity=".35" />
      <circle cx="1683" cy="338" r="23" fill="url(#green)" stroke="#f4f4f4" strokeWidth="2.500" />
      <text x="1664" y="342" fontSize="11" fontWeight="700" fill="#fff" fontFamily="Liberation Sans, sans-serif">33</text>
      <path transform="translate(1553 794)" d="M0 0V14L3.300 11 5.600 17 8 16 5.700 10.500H10.200Z" fill="#fff" stroke="#222" />
    </svg>
  );
}

function GraphicsArea() {
  return (
    <main className="relative min-w-0 flex-1 overflow-hidden bg-[#c5c8d3]">
      <Model />
      <div className="relative flex h-[30px] items-center justify-center pr-1">
        <Tools
          width="w-[26px]"
          caret="w-3.5"
          tone="text-[#8a8d96]"
          names={["zoomFit", "zoomArea", "prevView", "section", "viewCubeYellow", "viewA", "orient", "v", "displayStyle", "v", "eye", "v", "ballPencil", "ballScene", "v", "monitor", "v", "sphere", "zebra", "instant"]}
        />
      </div>
      <div className="absolute -left-px top-[398px] flex h-[39px] w-2 items-center justify-center border border-l-0 border-[#808080] bg-[#f8f8f8]">
        <span className="h-1.5 w-1.5 rounded-full border border-[#888] bg-[#ccc]" />
      </div>
      <div className="absolute right-0 top-[22px] flex w-6 flex-col border-l border-t border-[#808080]">
        {["home", "books", "folder", "palette", "ball", "list", "chats", "globe"].map((n) => (
          <button key={n} aria-label={n} className={`flex h-6 items-center justify-center border-b border-[#808080] ${n === "globe" ? "bg-[#f8f8f8]" : "bg-[#d4d4d4]"}`}>
            <Icon n={n} />
          </button>
        ))}
      </div>
    </main>
  );
}

/* ---------- footer ---------- */

const navPaths = ["M2 1V9M10 1 4 5 10 9Z", "M8 1 2 5 8 9Z", "M3 1 9 5 3 9Z", "M2 1 8 5 2 9ZM10 1V9"];

function ModelTabs() {
  return (
    <div className="flex h-4 shrink-0 items-stretch border-t border-[#808080] text-[12px] leading-3">
      <div className="flex border-r border-[#666]">
        {navPaths.map((d) => (
          <button key={d} aria-label="切换选项卡" className="flex w-4 items-center justify-center border border-[#8c8c8c] bg-[#b4b4b8]">
            <svg viewBox="0 0 12 10" className="h-2.5 w-3" fill="#8c8c90" stroke="#8c8c90" aria-hidden="true"><path d={d} /></svg>
          </button>
        ))}
      </div>
      <button className="-mt-px w-[46px] bg-[#f8f8f8]">模型</button>
      <button className="w-[57px] border-x border-[#8c8c8c] bg-[#d4d4d4] pb-0.5">3D 视图</button>
      <button className="w-20 border-r border-[#8c8c8c] bg-[#d4d4d4] pb-0.5 pr-2">运动算例 1</button>
    </div>
  );
}

const Grip = () => <span className="mx-px h-7 shrink-0 border-l-2 border-dotted border-[#a0a0a0]" />;
const Divider = () => <span className="mx-1 h-[22px] w-px shrink-0 bg-[#8c8c8c]" />;

const filterTools = ["fDot", "fLine", "fFace", "fSurf", "fCube", "fAxis", "fPlane", "fPoint", "fSketch", "fSegs", "fMid", "fCenter", "fClamp", "fDim", "fFinish", "fGtol", "fNote", "fDatum", "fWeld", "fHatch", "fDatumT", "fCosmetic", "fDeg", "fMass", "fConnA", "fConnB"];

function BottomTools() {
  const w = "w-[27px]";
  return (
    <div className="flex h-[33px] shrink-0 items-center border-b border-[#8c8c8c] pt-px">
      <Grip />
      <div className="ml-2 flex">
        <Tools width={w} names={["layersPen", "layers", "brush", "lines", "dashes", "edgeView", "colorLine"]} />
      </div>
      <span className="ml-[7px] mr-0.5 h-full w-px bg-[#8c8c8c]" />
      <Grip />
      <div className="ml-[7px] flex">
        <Tools width={w} names={["funnelGrey", "funnelsGrey", "funnelsPurple"]} />
      </div>
      <SelectTool main="w-[31px]" />
      <Tools width={w} names={["pointerGrey"]} />
      <Divider />
      <Tools width={w} names={filterTools} />
      <span className="ml-1.5 mr-[3px] h-full w-px bg-[#8c8c8c]" />
      <Grip />
      <div className="ml-[7px] flex">
        <Tools width={w} names={["w1", "w2", "w3", "w4", "w5", "w6", "w7"]} />
      </div>
      <Divider />
      <Tools width={w} names={["newSketch", "repair", "rectArrow"]} />
      <Divider />
      <Tools width={w} names={["boss"]} />
    </div>
  );
}

function TagsBox() {
  return (
    <div className="absolute bottom-[21px] right-[3px] flex h-[50px] w-[250px] items-start border-[5px] border-[#e9e9e9] bg-white pl-1 pt-1.5">
      <label htmlFor="tags" className="w-[38px] text-[11px] leading-4">Tags:</label>
      <input id="tags" className="h-[30px] w-[194px] border border-[#555] bg-[#e9e9e9] px-1 text-[12px] outline-none" />
    </div>
  );
}

function InputBar() {
  return (
    <div className="absolute bottom-0.5 right-0 flex h-[23px] w-[219px] items-center justify-end">
      <span className="absolute inset-y-0 right-0 w-[156px] border-t border-[#c8d4e0] bg-white" />
      <svg viewBox="0 0 219 23" className="absolute inset-0 h-full w-full overflow-visible" aria-hidden="true">
        <path d="M36 1 58-3 63 20 41 23Z" fill="#f05a28" />
        <path d="M44 5 56 3M43 10 59 8M46 16 58 14" stroke="#fff" strokeWidth="2" />
        <g fill="#2a78c8">
          <path d="M76 4V8H71V14H76V18H79V14H84V8H79V4ZM100 5H107V8H103V18H100ZM112 5 120 10 112 15ZM136 6H150V17H134Z" />
          <circle cx="166" cy="10" r="5" fill="#b0bed0" />
          <path d="M180 6H194V17H180ZM182 3H185V6H182ZM189 3H192V6H189Z" />
          <path d="M202 17 208 11Q207 5 213 5L211 8 213 10 217 8Q216 14 210 14L204 20Z" />
        </g>
        <g fill="#fff" stroke="#e8262c" strokeWidth="2.400" paintOrder="stroke" fontFamily="DejaVu Sans, Noto Sans CJK SC, sans-serif">
          <text x="0" y="18" fontSize="17" fontWeight="700">三维网</text>
          <text x="51" y="18" fontSize="17">www.3dportal.cn</text>
        </g>
      </svg>
    </div>
  );
}

function StatusBar() {
  return (
    <footer className="flex h-5 shrink-0 items-center justify-between border-b-2 border-[#4a5a6c] text-[12px] leading-[18px]">
      <span className="pt-px">SOLIDWORKS Premium 2016 x64 版</span>
      <div className="flex h-4 w-[270px] items-center border-l border-[#c4c4c4]">
        <span className="ml-2 h-full border-l border-[#c4c4c4] pl-[3px] pt-px leading-4">在编辑 零件</span>
      </div>
    </footer>
  );
}

export default function App() {
  return (
    <div className="relative flex h-screen flex-col overflow-hidden bg-[#f8f8f8] font-['Open_Sans','Noto_Sans_CJK_SC',sans-serif] text-black">
      <TitleBar />
      <div className="flex h-8 shrink-0 items-center pl-1">
        <Tools names={["cubeMove", "swap", "|", "fillet", "chamfer", "|", "pattern", "v", "|", "cubeX", "boxX", "|", "split", "combine"]} />
      </div>
      <div className="relative shrink-0">
        <CommandTabs />
        <div className="absolute right-[5px] top-2 flex items-center text-[#8c8f98]">
          <button aria-label="左窗格" className="flex w-[26px] justify-center"><WindowGlyph d="M1 1H13V13H1ZM8 4 4 7 8 10Z" /></button>
          <button aria-label="右窗格" className="flex w-[26px] justify-center"><WindowGlyph d="M1 1H13V13H1ZM7 4 11 7 7 10Z" /></button>
          <button aria-label="最小化文档" className="flex w-[26px] justify-center"><WindowGlyph d={MIN} /></button>
          <button aria-label="还原文档" className="flex w-[26px] justify-center"><WindowGlyph d={RESTORE} /></button>
          <button aria-label="关闭文档" className="flex w-[26px] justify-center"><WindowGlyph d={CLOSE} /></button>
        </div>
      </div>
      <div className="flex min-h-0 flex-1">
        <FeaturePanel />
        <GraphicsArea />
      </div>
      <ModelTabs />
      <BottomTools />
      <StatusBar />
      <TagsBox />
      <InputBar />
    </div>
  );
}
